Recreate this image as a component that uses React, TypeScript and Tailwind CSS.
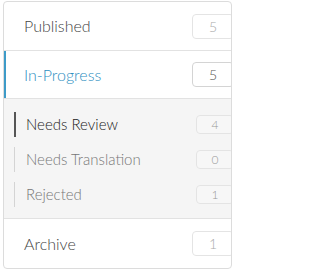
import React from 'react'

const font = { fontFamily: 'Lato, "Open Sans", sans-serif' }

// ─── CountBadge ───────────────────────────────────────────────
function CountBadge({ n, active, small }: { n: number; active?: boolean; small?: boolean }) {
  return (
    <span
      className={
        'flex items-center justify-center rounded-[4px] border shrink-0 font-light ' +
        (small
          ? 'w-[38px] h-[19px] text-[12px] border-[#e4e4e4] text-[#999] bg-[#f7f7f7] -mr-[3px]'
          : active
            ? 'w-[42px] h-[25px] text-[14px] border-[#d4d4d4] text-[#555] bg-white -mr-[3px]'
            : 'w-[42px] h-[25px] text-[14px] border-[#e4e4e4] text-[#aaa] bg-white -mr-[3px]')
      }
    >
      {n}
    </span>
  )
}

// ─── StatusRow ────────────────────────────────────────────────
function StatusRow({ label, n, active, className = '' }: { label: string; n: number; active?: boolean; className?: string }) {
  return (
    <div className={'relative flex items-center justify-between pl-[20px] ' + className}>
      {active && <span className="absolute -left-px top-0 bottom-0 w-[3px] bg-[#3d9bc8]" />}
      <span className={'text-[16px] font-light ' + (active ? 'text-[#2f8fbf]' : 'text-[#444]')}>{label}</span>
      <CountBadge n={n} active={active} />
    </div>
  )
}

// ─── SubRow ───────────────────────────────────────────────────
function SubRow({ label, n, current }: { label: string; n: number; current?: boolean }) {
  return (
    <div className="flex items-center justify-between h-[25px] pl-[10px]">
      <div className="flex items-center h-full">
        <span className={current ? 'w-[2px] h-full bg-[#555]' : 'w-px h-full bg-[#d4d4d4]'} />
        <span className={'text-[15px] font-light ' + (current ? 'ml-[10px] text-[#222]' : 'ml-[11px] text-[#777]')}>{label}</span>
      </div>
      <CountBadge n={n} small />
    </div>
  )
}

export default function App() {
  return (
    <div className="bg-white w-[235px] h-[271px] pt-px pl-[3px]" style={font}>
      <div className="w-[229px] h-[268px] border border-[#dcdcdc] rounded-[4px] overflow-hidden bg-white flex flex-col">
        <StatusRow label="Published" n={5} className="h-[49px] border-b border-[#e2e2e2]" />
        <StatusRow label="In-Progress" n={5} active className="h-[48px] border-b border-[#e2e2e2]" />
        <div className="bg-[#f5f5f5] border-b border-[#e2e2e2] h-[120px] pt-[13px] flex flex-col gap-[10px]">
          <SubRow label="Needs Review" n={4} current />
          <SubRow label="Needs Translation" n={0} />
          <SubRow label="Rejected" n={1} />
        </div>
        <StatusRow label="Archive" n={1} className="flex-1" />
      </div>
    </div>
  )
}
